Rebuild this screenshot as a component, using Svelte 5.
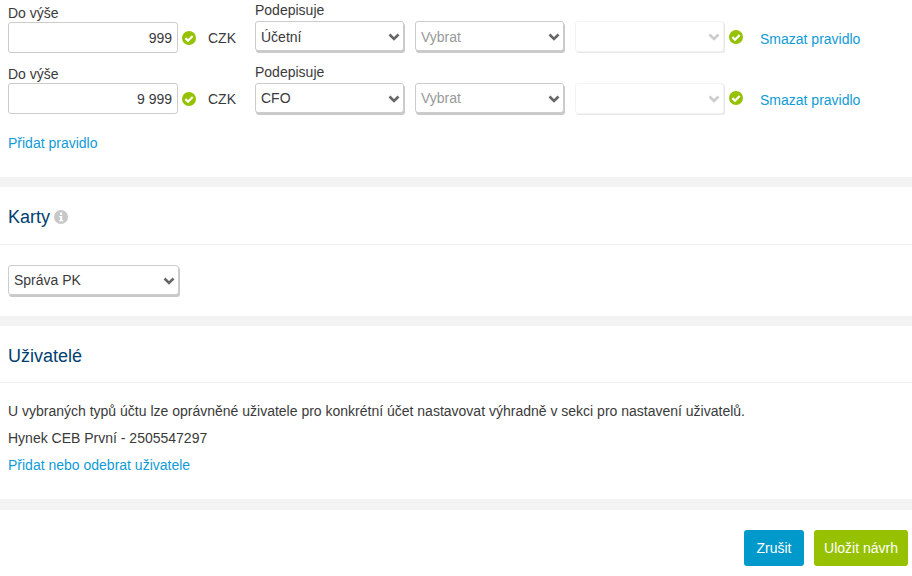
<script>
  const rules = [
    { amount: "999", signer: "Účetní" },
    { amount: "9 999", signer: "CFO" }
  ];
</script>

{#snippet check()}
  <svg class="check" width="14" height="14" viewBox="0 0 14 14">
    <circle cx="7" cy="7" r="7" fill="#94c100" />
    <path d="M3.4 7.1 L6 9.7 L10.7 5" fill="none" stroke="#fff" stroke-width="2.2" />
  </svg>
{/snippet}

{#snippet picker(value, options, muted, off, wide)}
  <div class="picker" class:off class:wide>
    <select class:muted disabled={off}>
      {#each options as o}
        <option selected={o === value}>{o}</option>
      {/each}
    </select>
    <svg class="chevron" width="12" height="8" viewBox="0 0 12 8">
      <path d="M1.5 1.5 L6 6 L10.5 1.5" fill="none" stroke="currentColor" stroke-width="2.6" />
    </svg>
  </div>
{/snippet}

<div class="page">
  <section class="rules">
    {#each rules as rule}
      <div class="rule">
        <div class="amount">
          <div class="label">Do výše</div>
          <div class="amount_line">
            <input class="amount_input" type="text" value={rule.amount} />
            {@render check()}
            <span class="currency">CZK</span>
          </div>
        </div>
        <div class="signers">
          <div class="label signer_label">Podepisuje</div>
          <div class="signer_line">
            {@render picker(rule.signer, [rule.signer], false, false, false)}
            {@render picker("Vybrat", ["Vybrat"], true, false, false)}
            {@render picker("", [""], false, true, false)}
            {@render check()}
            <a class="link delete" href="#top">Smazat pravidlo</a>
          </div>
        </div>
      </div>
    {/each}
    <a class="link add_rule" href="#top">Přidat pravidlo</a>
  </section>

  <div class="band"></div>

  <section>
    <h2 class="head cards_head">Karty<svg class="info" width="14" height="14" viewBox="0 0 14 14">
        <circle cx="7" cy="7" r="7" fill="#c8c8c8" />
        <rect x="6" y="2.6" width="2.2" height="2.2" fill="#fff" />
        <path d="M5.2 6 H8.2 V10 H9.2 V11.2 H5.2 V10 H6.2 V7.2 H5.2 Z" fill="#fff" />
      </svg>
    </h2>
    <div class="cards_body">
      {@render picker("Správa PK", ["Správa PK"], false, false, true)}
    </div>
  </section>

  <div class="band"></div>

  <section>
    <h2 class="head">Uživatelé</h2>
    <div class="users_body">
      <p>U vybraných typů účtu lze oprávněné uživatele pro konkrétní účet nastavovat výhradně v sekci pro nastavení uživatelů.</p>
      <p>Hynek CEB První - 2505547297</p>
      <p><a class="link" href="#top">Přidat nebo odebrat uživatele</a></p>
    </div>
  </section>

  <div class="band last"></div>

  <div class="actions">
    <button class="btn cancel">Zrušit</button>
    <button class="btn save">Uložit návrh</button>
  </div>
</div>

<style>
  :global(body) {
    margin: 0;
    background: #fff;
  }

  .page {
    width: 912px;
    height: 576px;
    overflow: hidden;
    font-family: "Liberation Sans", Arial, sans-serif;
    font-size: 14px;
    color: #3a3a3a;
  }

  .rules {
    height: 177px;
    padding-left: 8px;
    box-sizing: border-box;
  }

  .rule {
    display: flex;
    height: 62px;
  }

  .label {
    height: 18px;
    line-height: 18px;
    padding-top: 4px;
  }

  .rule + .rule .amount {
    margin-top: -1px;
  }

  .signer_label {
    padding-top: 1px;
    height: 20px;
  }

  .amount {
    width: 247px;
  }

  .amount_line,
  .signer_line {
    display: flex;
    align-items: center;
  }

  .amount_input {
    width: 170px;
    height: 31px;
    box-sizing: border-box;
    border: 1px solid #ccc;
    border-radius: 3px;
    padding: 0 5px;
    font: inherit;
    color: #3a3a3a;
    text-align: right;
    outline: none;
  }

  .check {
    margin-left: 4px;
    flex: none;
  }

  .currency {
    margin-left: 12px;
  }

  .signer_line {
    gap: 11px;
  }

  .signer_line .check {
    margin-left: -6px;
  }

  .rule + .rule .signer_line .check {
    margin-bottom: 2px;
  }

  .picker {
    position: relative;
    width: 149px;
    height: 31px;
  }

  .picker.wide {
    width: 171px;
  }

  .picker select {
    width: 100%;
    height: 30px;
    box-sizing: border-box;
    appearance: none;
    background: #fff;
    border: 1px solid #ccc;
    border-radius: 3px;
    box-shadow: 1px 2px 0 #c9c9c9;
    padding: 0 5px;
    font: inherit;
    color: #3a3a3a;
    outline: none;
  }

  .rule:first-child .picker select {
    padding-top: 2px;
  }

  .picker select.muted {
    color: #999;
  }

  .picker.off select {
    height: 31px;
    border-color: #eee;
    box-shadow: 1px 1px 0 #ddd;
  }

  .chevron {
    position: absolute;
    right: 4px;
    top: 12px;
    color: #666;
    pointer-events: none;
  }

  .off .chevron {
    color: #ccc;
  }

  .link {
    color: #0f9bd7;
    text-decoration: none;
  }

  .delete {
    margin-left: 6px;
    padding-top: 4px;
  }

  .rule + .rule .delete {
    padding-top: 2px;
  }

  .add_rule {
    display: inline-block;
    margin-top: 11px;
  }

  .band {
    height: 10px;
    background: #f3f3f3;
  }

  .band.last {
    height: 11px;
  }

  .head {
    margin: 0;
    height: 56px;
    line-height: 60px;
    padding-left: 8px;
    border-bottom: 1px solid #f0f0f0;
    font-size: 18px;
    font-weight: 400;
    color: #003e6f;
  }

  .cards_head {
    height: 57px;
  }

  .info {
    margin-left: 4px;
    vertical-align: -1px;
  }

  .cards_body {
    height: 71px;
    padding: 20px 8px 0;
    box-sizing: border-box;
  }

  .users_body {
    height: 116px;
    padding: 19px 8px 0;
    box-sizing: border-box;
  }

  .users_body p {
    margin: 0 0 9px;
    line-height: 18px;
  }

  .actions {
    display: flex;
    justify-content: flex-end;
    gap: 10px;
    padding: 20px 4px 0 0;
  }

  .btn {
    height: 36px;
    border: 0;
    border-radius: 3px;
    color: #fff;
    font: inherit;
    padding: 0;
  }

  .cancel {
    width: 60px;
    background: #0099cc;
  }

  .save {
    width: 94px;
    background: #95c100;
  }
</style>
